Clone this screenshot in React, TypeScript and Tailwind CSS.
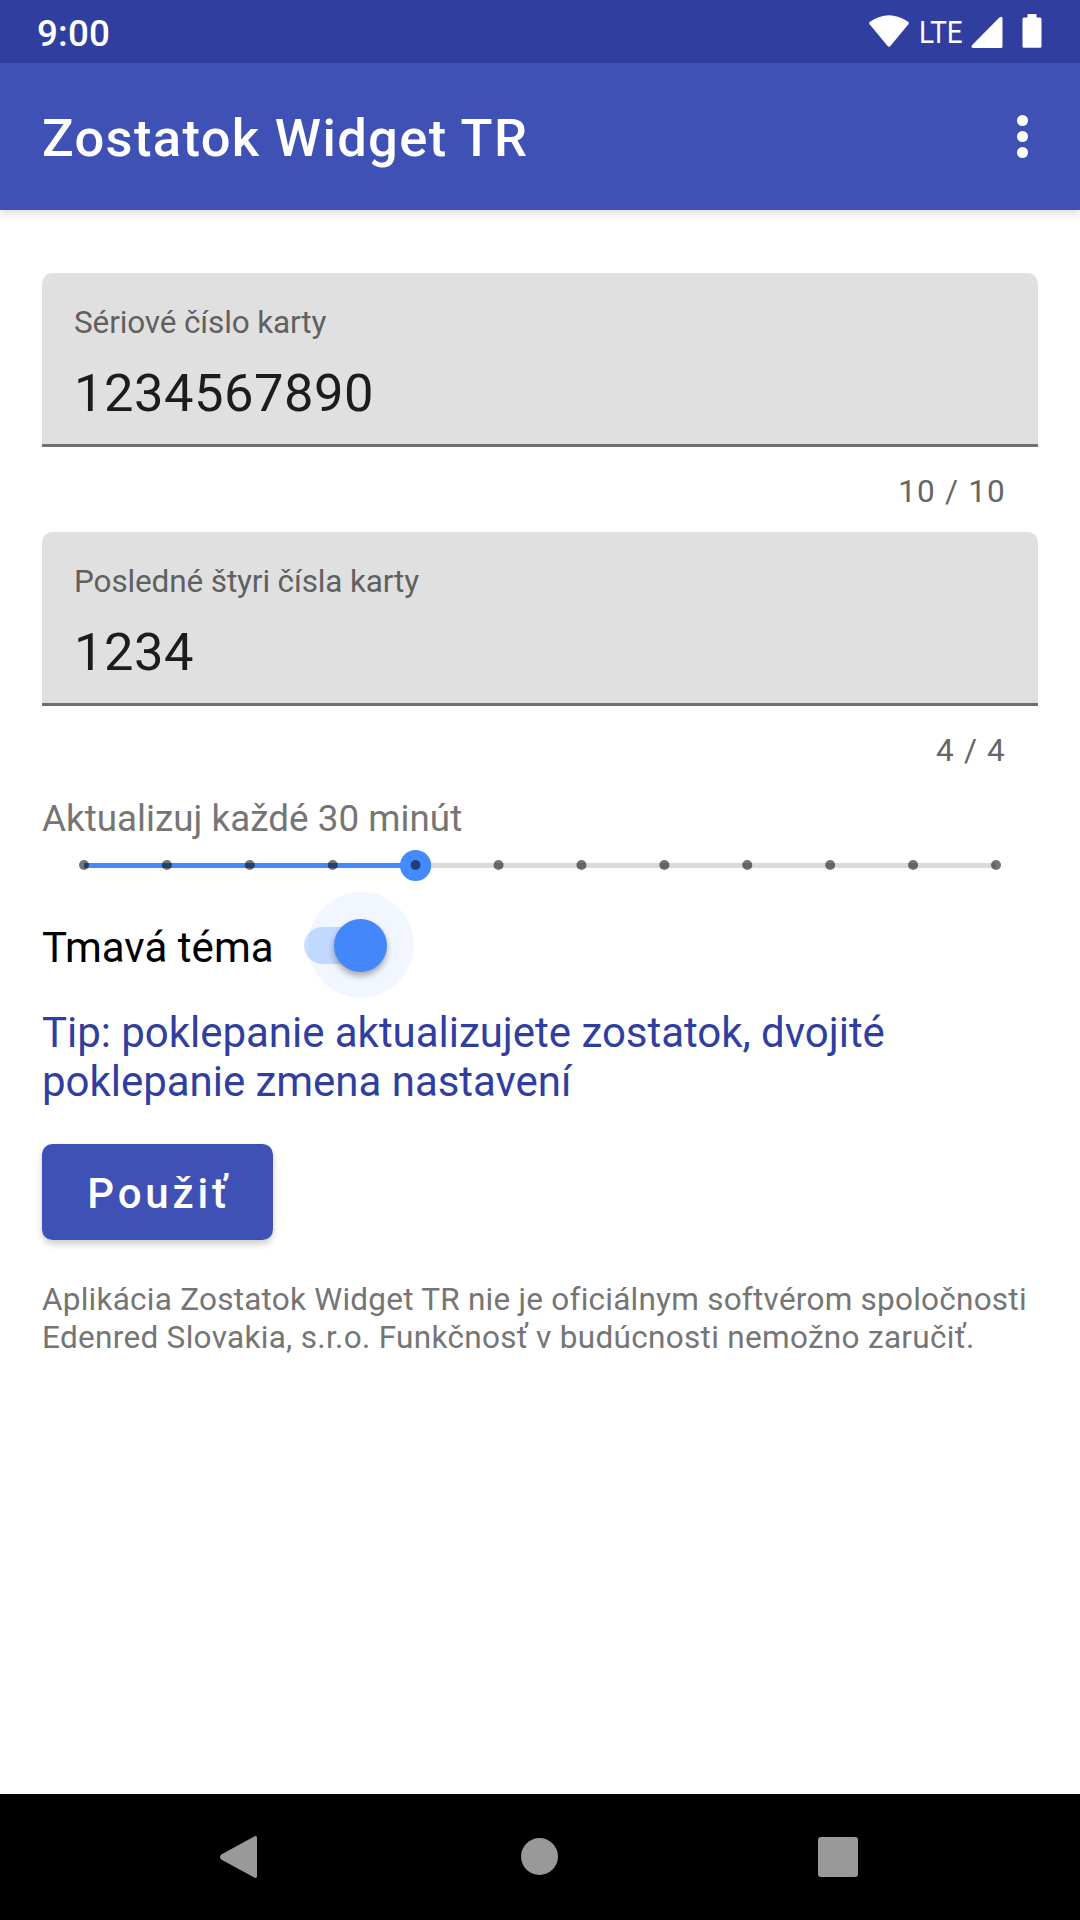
import React from "react";

const TICKS = Array.from({ length: 12 }, (_, i) => i);

function StatusBar() {
  return (
    <div className="flex h-[63px] items-center justify-between bg-[#303f9f] pr-[38px] pl-[37px] text-white">
      <span className="pt-[3px] text-[36.75px] leading-[43px] font-medium tracking-[0.2px]">9:00</span>
      <div className="flex h-full items-center">
        <svg className="h-[63px] w-[42px]" viewBox="0 0 42 63" fill="#fff">
          <path d="M1.6 24.2 Q.5 22.8 1.9 21.8 Q21 8.600 40.200 21.800 Q41.500 22.800 40.400 24.200 L22.600 45.800 Q21 47.600 19.400 45.800 Z" />
        </svg>
        <div className="ml-[9px] flex w-[52px]">
          <span className="origin-left scale-x-[0.87] text-[32px] leading-[38px] font-normal">LTE</span>
        </div>
        <svg className="h-[63px] w-[32px]" viewBox="0 0 32 63" fill="#fff">
          <path d="M28.400 17.600 Q31.500 15.500 31.500 18.500 V46.500 Q31.500 48 30 48 H2 Q-.6 47.500 1.200 44.900 Z" />
        </svg>
        <svg className="ml-[19px] h-[63px] w-[20px]" viewBox="0 0 20 63" fill="#fff">
          <path d="M5.500 14 H14.500 V17.500 H18 Q19.500 17.500 19.500 19 V46.300 Q19.500 47.800 18 47.800 H2 Q.5 47.800 .5 46.300 V19 Q.5 17.500 2 17.500 H5.500 Z" />
        </svg>
      </div>
    </div>
  );
}

function AppBar() {
  return (
    <header className="relative flex h-[147px] items-center justify-between bg-[#3f51b5] pr-[52px] pl-[42px] text-white shadow-[0_3px_9px_rgba(0,0,0,0.15)]">
      <h1 className="pt-[3px] text-[52.5px] leading-[62px] font-medium tracking-[1.34px]">Zostatok Widget TR</h1>
      <button className="flex flex-col gap-[5px]" aria-label="Menu">
        <span className="size-[11px] rounded-full bg-white" />
        <span className="size-[11px] rounded-full bg-white" />
        <span className="size-[11px] rounded-full bg-white" />
      </button>
    </header>
  );
}

function Field({ label, value, counter }: { label: string; value: string; counter: string }) {
  return (
    <div className="flex h-[259px] flex-col">
      <div className="flex h-[174px] flex-col rounded-t-[10.5px] border-b-[3px] border-[#707070] bg-[#e0e0e0] px-8 pt-[31px]">
        <span className="text-[31.5px] leading-[38px] tracking-[-0.13px] text-[#606060]">{label}</span>
        <span className="mt-[20px] text-[52.5px] leading-[62px] tracking-[0.5px] text-[#1c1c1c]">{value}</span>
      </div>
      <span className="mt-[26px] pr-8 text-right text-[31.5px] leading-[38px] tracking-[1.2px] text-[#666]">{counter}</span>
    </div>
  );
}

function Slider() {
  return (
    <svg className="block h-[42px] w-full" viewBox="0 0 996 42">
      <rect x="42" y="19" width="912" height="5" fill="#dadada" />
      <rect x="42" y="19" width="331.600" height="5" fill="#448aff" />
      <circle cx="373.600" cy="21.500" r="15.600" fill="#448aff" />
      {TICKS.map((i) => (
        <circle key={i} cx={42 + (912 / 11) * i} cy="21" r="5" fill="#000" fillOpacity="0.54" />
      ))}
    </svg>
  );
}

function Toggle() {
  return (
    <div className="relative h-[37px] w-[83px] rounded-full" role="switch" aria-checked="true">
      <div className="h-[37px] w-[56px] rounded-l-full bg-[#cbdeff]" />
      <div className="absolute top-[-35px] left-[4px] size-[106px] rounded-full bg-[#448aff]/7" />
      <div className="absolute top-[-8px] left-[30px] size-[53px] rounded-full bg-[#4487fb] shadow-[0_4px_6px_rgba(0,0,0,0.32)]" />
    </div>
  );
}

function NavBar() {
  return (
    <nav className="flex h-[126px] items-center bg-black pl-[218px]">
      <svg className="h-[46px] w-[42px]" viewBox="0 0 42 46" fill="#999">
        <path d="M36.200 2.400 Q39 .9 39 4 V42 Q39 45.100 36.200 43.600 L3.200 25.400 Q.8 23 3.200 20.600 Z" />
      </svg>
      <span className="mb-px ml-[261px] size-[37px] rounded-full bg-[#999]" />
      <span className="ml-[260px] size-[40px] rounded-[3px] bg-[#999]" />
    </nav>
  );
}

export default function App() {
  return (
    <div className="flex h-[1920px] w-[1080px] flex-col overflow-hidden bg-white font-[Roboto,sans-serif]">
      <StatusBar />
      <AppBar />
      <main className="flex flex-1 flex-col px-[42px] pt-[63px]">
        <Field label="Sériové číslo karty" value="1234567890" counter="10 / 10" />
        <Field label="Posledné štyri čísla karty" value="1234" counter="4 / 4" />
        <p className="mt-[6px] text-[36.75px] leading-[43px] tracking-[0.04px] text-[#757575]">Aktualizuj každé 30 minút</p>
        <div className="mt-[4px]">
          <Slider />
        </div>
        <div className="mt-[34px] flex h-[50px] items-center">
          <span className="w-[262px] pt-[5px] text-[42px] leading-[50px] tracking-[0.05px] text-black">Tmavá téma</span>
          <Toggle />
        </div>
        <p className="mt-[38px] text-[42px] leading-[49px] tracking-[-0.03px] text-[#303f9f]">
          Tip: poklepanie aktualizujete zostatok, dvojité
          <br />
          poklepanie zmena nastavení
        </p>
        <button className="mt-[38px] h-[96px] w-[231px] rounded-[10.5px] bg-[#3f51b5] pt-[3px] pl-[3px] text-center text-[42px] font-medium tracking-[3.85px] text-white shadow-[0_4px_7px_rgba(0,0,0,0.2)]">
          Použiť
        </button>
        <p className="mt-[41px] text-[31.5px] leading-[38px] tracking-[0.24px] whitespace-nowrap text-[#757575]">
          Aplikácia Zostatok Widget TR nie je oficiálnym softvérom spoločnosti
          <br />
          <span className="tracking-[0.31px]">Edenred Slovakia, s.r.o. Funkčnosť v budúcnosti nemožno zaručiť.</span>
        </p>
      </main>
      <NavBar />
    </div>
  );
}
